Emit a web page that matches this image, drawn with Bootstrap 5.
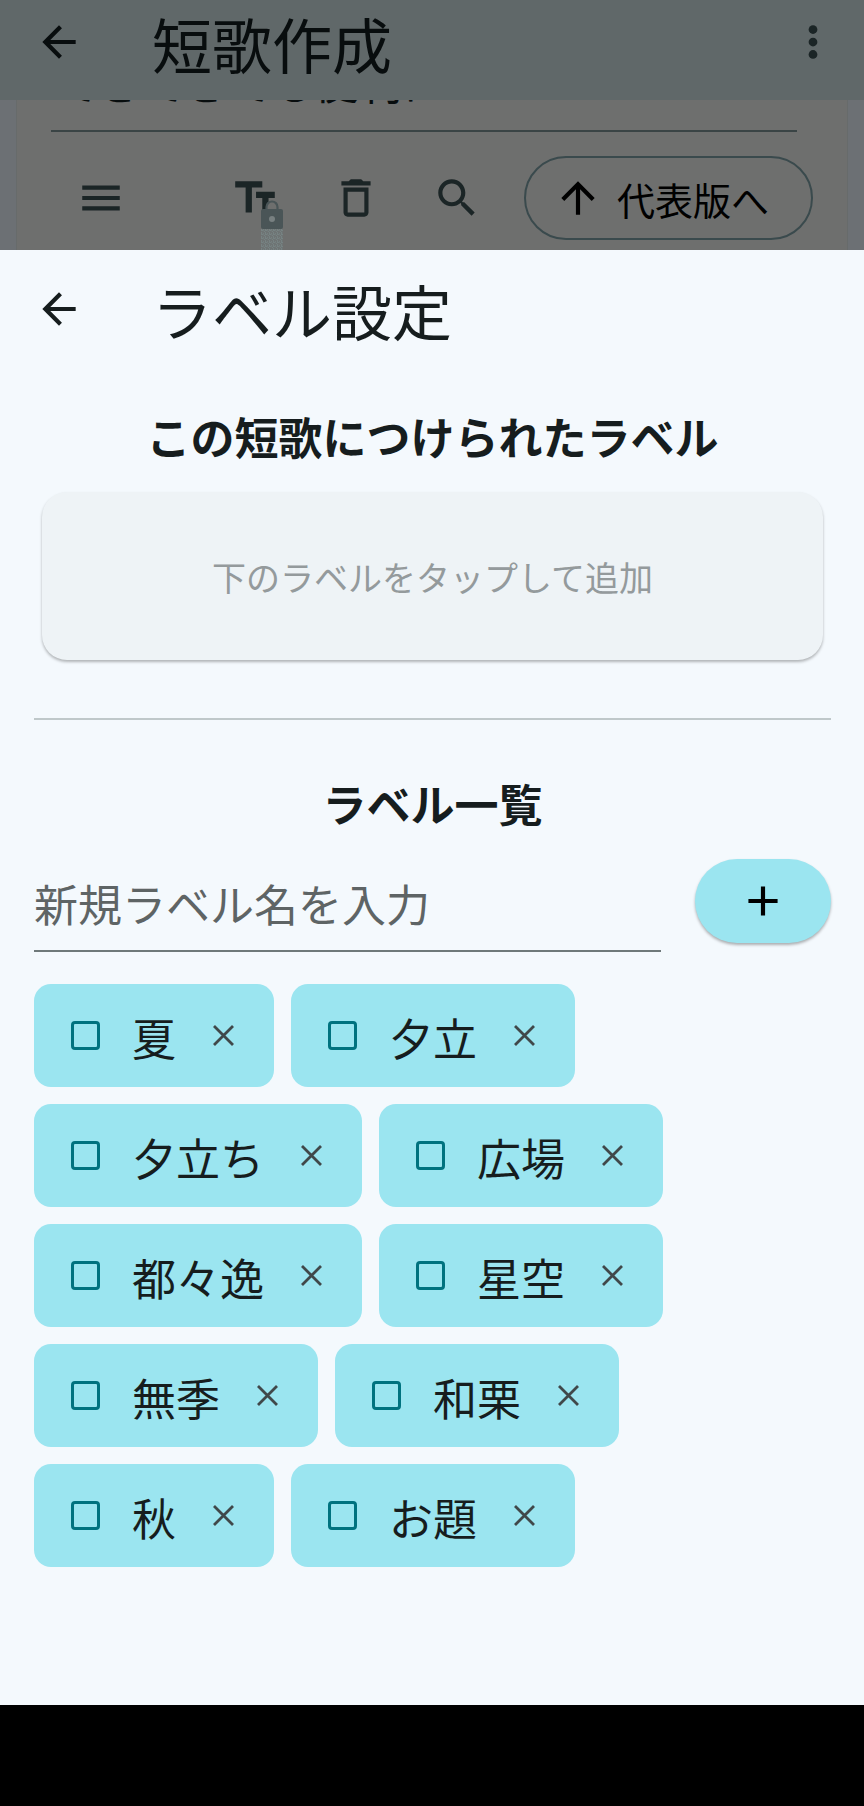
<!DOCTYPE html>
<html lang="ja">
<head>
<meta charset="utf-8">
<meta name="viewport" content="width=device-width, initial-scale=1">
<title>ラベル設定</title>
<link href="https://cdn.jsdelivr.net/npm/bootstrap@5.3.0/dist/css/bootstrap.min.css" rel="stylesheet">
<style>
  :root { --ink: #161d1e; --cyan: #9be5f0; --teal: #00727f; --sheet: #f4f9fd; }
  body { font-family: "Noto Sans CJK JP", sans-serif; color: var(--ink); background: #000; }
  .screen { min-height: 100vh; }
  .icon-button { background: none; border: 0; padding: 0; line-height: 0; color: inherit; }
  .backdrop-area { background: #6c7074; }
  .top-bar { background: #606869; height: 100px; padding: 0 34px 16px; color: #080d0e; }
  .bar-title { font-size: 60px; line-height: 72px; font-weight: 400; margin: 0 0 0 68px; padding-top: 2px; }
  .poem-card { background: #6e6f6e; height: 150px; margin: 0 16px; padding: 0 34px; border: solid #676b6b; border-width: 0 1px; }
  .poem-clip { height: 32px; overflow: hidden; border-bottom: 2px solid #3a4445; margin-right: 16px; }
  .poem-text { font-size: 44px; line-height: 64px; margin-top: -51px; color: #080d0e; padding-left: 4px; white-space: nowrap; }
  .tools { height: 84px; margin-top: 24px; padding-left: 25px; gap: 42px; color: #1b2526; }
  .tool-set { gap: 51px; }
  .lock-mark { position: absolute; left: 31px; top: 27px; }
  .promote { height: 84px; border: 2px solid #3a4a4d; border-radius: 42px; background: none; padding: 0 42px 0 27px; gap: 14px; font-size: 38px; line-height: 48px; color: #000; }
  .promote span { padding-top: 2px; white-space: nowrap; }
  .sheet { background: var(--sheet); padding: 0 33px 0 34px; }
  .sheet-bar { height: 118px; margin-bottom: 36px; }
  .section-title { font-size: 44px; line-height: 64px; font-weight: 700; margin: 0; text-align: center; }
  .drop-card { background: #eef3f6; border-radius: 25px; height: 168px; margin: 24px 8px 0; box-shadow: 0 2px 3px rgba(0,0,0,.28); color: #949a9c; font-size: 34px; }
  .rule { height: 2px; background: #bfc8ca; margin: 58px 0 51px; border: 0; opacity: 1; }
  .new-label { gap: 34px; margin-top: 24px; }
  .name-input { border: 0; border-bottom: 2px solid #6f797a; background: none; font-size: 44px; line-height: 64px; height: 93px; padding: 0 0 4px; min-width: 0; color: var(--ink); outline: 0; }
  .name-input::placeholder { color: #5e6465; opacity: 1; }
  .add-button { width: 136px; height: 84px; border: 0; border-radius: 42px; background: var(--cyan); box-shadow: 0 2px 3px rgba(0,0,0,.3); color: #000; padding: 0; }
  .chips { gap: 17px; margin: 32px 0 0; padding: 0; list-style: none; }
  .chip { background: var(--cyan); border-radius: 17px; height: 103px; padding: 0 40px 0 37px; gap: 36px; font-size: 44px; line-height: 64px; }
  .chip label { gap: 32px; }
  .chip label span { padding-top: 3px; padding-right: 1px; }
  .chip input { appearance: none; width: 29px; height: 29px; border: 3px solid var(--teal); border-radius: 4px; margin: 0; }
  .chip input:checked { background: var(--teal); }
  .chip .icon-button { color: #40484a; }
  .nav-area { height: 101px; background: #000; }
</style>
</head>
<body>
<svg width="0" height="0" class="position-absolute" aria-hidden="true">
  <symbol id="i-back" viewBox="0 0 24 24"><path d="M20 11H7.83l5.59-5.59L12 4l-8 8 8 8 1.41-1.41L7.83 13H20z"/></symbol>
  <symbol id="i-close" viewBox="0 0 21 21"><path d="M1 1l19 19M20 1L1 20" fill="none" stroke="currentColor" stroke-width="2.8"/></symbol>
</svg>
<div class="screen d-flex flex-column">
  <div class="backdrop-area">
    <header class="top-bar d-flex align-items-center">
      <button class="icon-button" aria-label="戻る"><svg width="50" height="50" fill="currentColor"><use href="#i-back"/></svg></button>
      <h1 class="bar-title">短歌作成</h1>
      <button class="icon-button ms-auto" aria-label="メニュー"><svg width="34" height="50" viewBox="4 0 16 24" fill="#1b2526"><circle cx="12" cy="6" r="2.1"/><circle cx="12" cy="12" r="2.1"/><circle cx="12" cy="18" r="2.1"/></svg></button>
    </header>
    <section class="poem-card">
      <div class="poem-clip"><div class="poem-text">てきてきても便利に</div></div>
      <div class="tools d-flex align-items-center">
        <div class="tool-set d-flex flex-grow-1">
          <button class="icon-button me-auto" aria-label="並べ替え"><svg width="50" height="50" viewBox="0 0 24 24" fill="currentColor"><path d="M3 18h18v-2H3v2zm0-5h18v-2H3v2zm0-7v2h18V6H3z"/></svg></button>
          <button class="icon-button position-relative" aria-label="文字サイズ">
            <svg width="50" height="50" viewBox="0 0 24 24" fill="currentColor"><path d="M2.5 4v3h5v12h3V7h5V4h-13zm19 5h-9v3h3v7h3v-7h3V9z"/></svg>
            <svg class="lock-mark" width="22" height="50" viewBox="0 0 22 50">
              <defs><pattern id="grain" width="4" height="4" patternUnits="userSpaceOnUse"><rect width="4" height="4" fill="#6e7474"/><path d="M0 0h1v2h1v1h-2zM2 1h1v2h1v1h-1z" fill="#768282"/></pattern></defs>
              <rect y="29" width="22" height="21" fill="url(#grain)"/>
              <path d="M5.500 11V7a5.500 5.500 0 0 1 11 0v4" fill="#6e6f6e" stroke="#4a5557" stroke-width="2.200"/>
              <rect y="9" width="22" height="20" rx="2" fill="#4a5557"/>
              <circle cx="11" cy="19" r="3" fill="#788081"/>
            </svg>
          </button>
          <button class="icon-button" aria-label="削除"><svg width="50" height="50" viewBox="0 0 24 24" fill="currentColor"><path d="M16 9v10H8V9h8m-1.500-6h-5l-1 1H5v2h14V4h-3.500l-1-1zM18 7H6v12c0 1.100.9 2 2 2h8c1.100 0 2-.9 2-2V7z"/></svg></button>
          <button class="icon-button" aria-label="検索"><svg width="50" height="50" viewBox="0 0 24 24" fill="currentColor"><path d="M15.500 14h-.79l-.28-.27C15.410 12.590 16 11.110 16 9.500 16 5.910 13.090 3 9.500 3S3 5.910 3 9.500 5.910 16 9.500 16c1.610 0 3.090-.59 4.230-1.570l.27.28v.79l5 4.990L20.490 19l-4.990-5zm-6 0C7.010 14 5 11.990 5 9.500S7.010 5 9.500 5 14 7.010 14 9.500 11.990 14 9.500 14z"/></svg></button>
        </div>
        <button class="promote d-flex align-items-center"><svg width="50" height="50" viewBox="0 0 24 24" fill="currentColor"><path d="M4 12l1.410 1.410L11 7.830V20h2V7.830l5.580 5.590L20 12l-8-8-8 8z"/></svg><span>代表版へ</span></button>
      </div>
    </section>
  </div>
  <main class="sheet flex-grow-1">
    <div class="sheet-bar d-flex align-items-center">
      <button class="icon-button" aria-label="戻る"><svg width="50" height="50" fill="currentColor"><use href="#i-back"/></svg></button>
      <h2 class="bar-title">ラベル設定</h2>
    </div>
    <h3 class="section-title">この短歌につけられたラベル</h3>
    <div class="drop-card d-flex align-items-center justify-content-center">下のラベルをタップして追加</div>
    <hr class="rule">
    <h3 class="section-title">ラベル一覧</h3>
    <form class="new-label d-flex align-items-start">
      <input class="name-input flex-grow-1" type="text" placeholder="新規ラベル名を入力" aria-label="新規ラベル名">
      <button class="add-button d-flex align-items-center justify-content-center flex-shrink-0" type="button" aria-label="追加"><svg width="50" height="50" viewBox="0 0 24 24" fill="currentColor"><path d="M19 13h-6v6h-2v-6H5v-2h6V5h2v6h6v2z"/></svg></button>
    </form>
    <ul class="chips d-flex flex-wrap">
      <li class="chip d-flex align-items-center"><label class="d-flex align-items-center"><input type="checkbox"><span>夏</span></label><button class="icon-button" aria-label="夏を削除"><svg width="21" height="21"><use href="#i-close"/></svg></button></li>
      <li class="chip d-flex align-items-center"><label class="d-flex align-items-center"><input type="checkbox"><span>夕立</span></label><button class="icon-button" aria-label="夕立を削除"><svg width="21" height="21"><use href="#i-close"/></svg></button></li>
      <li class="chip d-flex align-items-center"><label class="d-flex align-items-center"><input type="checkbox"><span>夕立ち</span></label><button class="icon-button" aria-label="夕立ちを削除"><svg width="21" height="21"><use href="#i-close"/></svg></button></li>
      <li class="chip d-flex align-items-center"><label class="d-flex align-items-center"><input type="checkbox"><span>広場</span></label><button class="icon-button" aria-label="広場を削除"><svg width="21" height="21"><use href="#i-close"/></svg></button></li>
      <li class="chip d-flex align-items-center"><label class="d-flex align-items-center"><input type="checkbox"><span>都々逸</span></label><button class="icon-button" aria-label="都々逸を削除"><svg width="21" height="21"><use href="#i-close"/></svg></button></li>
      <li class="chip d-flex align-items-center"><label class="d-flex align-items-center"><input type="checkbox"><span>星空</span></label><button class="icon-button" aria-label="星空を削除"><svg width="21" height="21"><use href="#i-close"/></svg></button></li>
      <li class="chip d-flex align-items-center"><label class="d-flex align-items-center"><input type="checkbox"><span>無季</span></label><button class="icon-button" aria-label="無季を削除"><svg width="21" height="21"><use href="#i-close"/></svg></button></li>
      <li class="chip d-flex align-items-center"><label class="d-flex align-items-center"><input type="checkbox"><span>和栗</span></label><button class="icon-button" aria-label="和栗を削除"><svg width="21" height="21"><use href="#i-close"/></svg></button></li>
      <li class="chip d-flex align-items-center"><label class="d-flex align-items-center"><input type="checkbox"><span>秋</span></label><button class="icon-button" aria-label="秋を削除"><svg width="21" height="21"><use href="#i-close"/></svg></button></li>
      <li class="chip d-flex align-items-center"><label class="d-flex align-items-center"><input type="checkbox"><span>お題</span></label><button class="icon-button" aria-label="お題を削除"><svg width="21" height="21"><use href="#i-close"/></svg></button></li>
    </ul>
  </main>
  <footer class="nav-area"></footer>
</div>
<script src="https://cdn.jsdelivr.net/npm/bootstrap@5.3.0/dist/js/bootstrap.bundle.min.js"></script>
</body>
</html>
